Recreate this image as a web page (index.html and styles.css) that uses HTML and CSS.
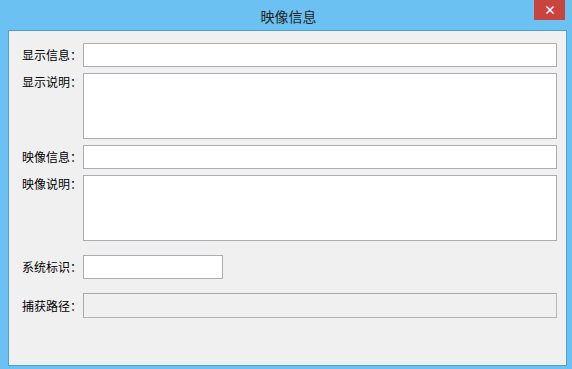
FILE: index.html
```html
<!DOCTYPE html>
<html lang="zh-CN">
<head>
  <meta charset="UTF-8">
  <title>映像信息</title>
  <link rel="stylesheet" href="styles.css">
</head>
<body>
  <div class="window">
    <div class="titlebar">
      <span class="title">映像信息</span>
      <button class="close" title="关闭">
        <svg width="10" height="10" viewBox="0 0 10 10">
          <path d="M1.5 1.5 L8.5 8.5 M8.5 1.5 L1.5 8.5" stroke="#fff" stroke-width="1.5" fill="none"/>
        </svg>
      </button>
    </div>

    <div class="client">
      <div class="form">
        <label class="lbl">显示信息：</label>
        <input type="text" class="field">

        <label class="lbl top">显示说明：</label>
        <textarea class="field area"></textarea>

        <label class="lbl">映像信息：</label>
        <input type="text" class="field">

        <label class="lbl top">映像说明：</label>
        <textarea class="field area"></textarea>

        <label class="lbl sp">系统标识：</label>
        <input type="text" class="field short sp">

        <label class="lbl sp">捕获路径：</label>
        <input type="text" class="field path sp" disabled>
      </div>
    </div>
  </div>
</body>
</html>
```

FILE: styles.css
```css
body {
  margin: 0;
  font-family: "Noto Sans CJK SC", "Noto Sans", sans-serif;
  background: #6bc1f1;
}

.window {
  width: 572px;
  height: 369px;
  box-sizing: border-box;
  background: #6bc1f1;
  padding: 0 5px 3px 8px;
  display: flex;
  flex-direction: column;
}

.titlebar {
  height: 30px;
  display: flex;
  align-items: center;
  justify-content: center;
  position: relative;
}

.title {
  font-size: 14px;
  color: #222;
  margin-left: 2px;
  margin-top: 1px;
}

.close {
  position: absolute;
  top: 0;
  right: 2px;
  width: 31px;
  height: 20px;
  border: none;
  padding: 0;
  background: #c7453e;
  display: flex;
  align-items: center;
  justify-content: center;
}

.client {
  flex: 1;
  background: #f0f0f0;
  border: 1px solid #4f9fd6;
  padding: 12px 9px 0 13px;
}

.form {
  display: grid;
  grid-template-columns: 61px 474px;
  row-gap: 6px;
  align-items: center;
}

.lbl {
  font-size: 12px;
  color: #000;
  line-height: 16px;
  white-space: nowrap;
}

.lbl.top {
  align-self: start;
  padding-top: 1px;
}

.field {
  box-sizing: border-box;
  height: 24px;
  margin: 0;
  border: 1px solid #abadb3;
  background: #fff;
  font: inherit;
  font-size: 12px;
}

.area {
  height: 66px;
  resize: none;
}

.sp {
  margin-top: 8px;
}

.short {
  width: 140px;
}

.path {
  height: 25px;
  background: #f0f0f0;
  border: 1px solid #a9a9a9;
  border-bottom-color: #b4b4b4;
  border-right-color: #b8b8b8;
}
```
